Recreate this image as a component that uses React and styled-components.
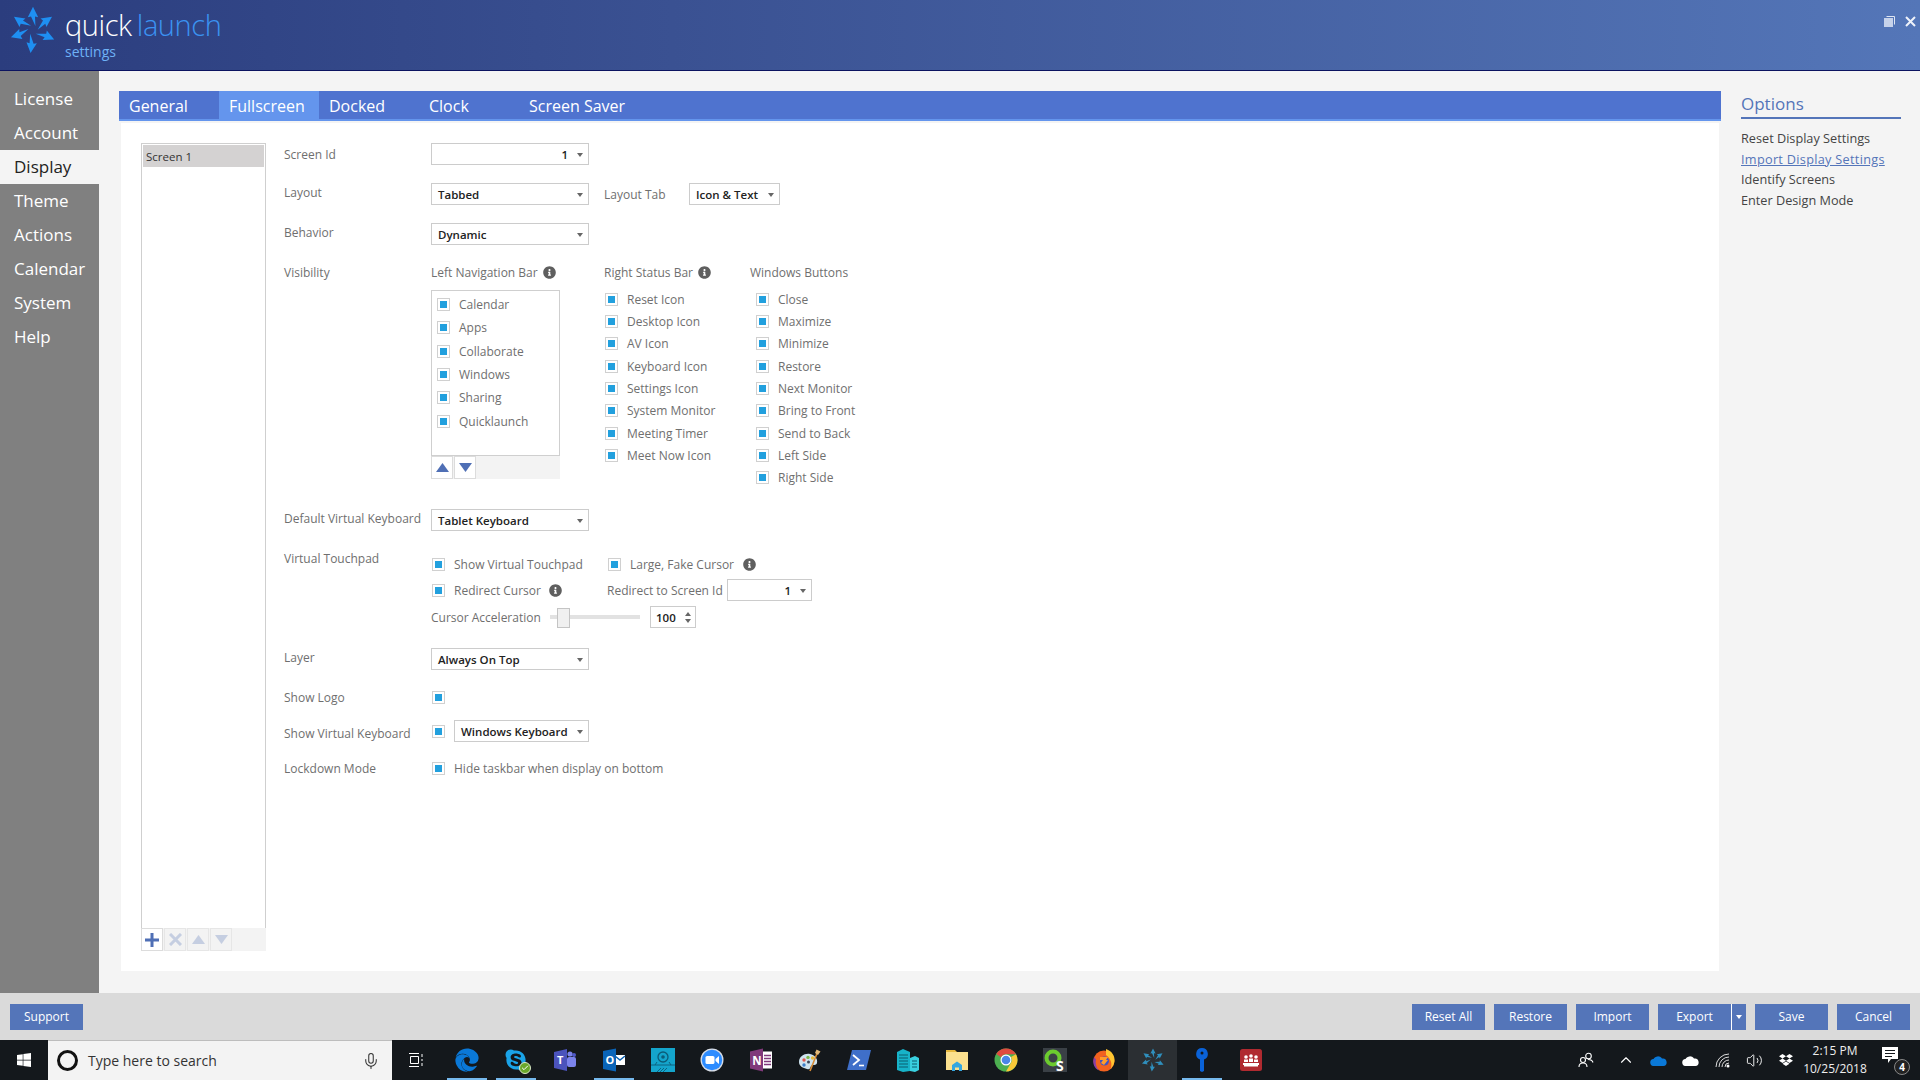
import React from 'react';
import styled, { createGlobalStyle } from 'styled-components';
import { FaInfoCircle, FaEdge, FaSkype, FaWindows, FaDropbox } from 'react-icons/fa';
import { ChevronUp, Volume2, Check, Mic } from 'lucide-react';

const Global = createGlobalStyle`
    html, body { margin: 0; padding: 0; background: #f4f4f4; }
    * { box-sizing: border-box; }
    body { font-family: "Open Sans", "Noto Sans", sans-serif; }
`;

const Page = styled.div`
    width: 1920px;
    height: 1080px;
    display: flex;
    flex-direction: column;
    overflow: hidden;
    background: #f4f4f4;
`;

const Header = styled.header`
    height: 71px;
    flex: none;
    display: flex;
    justify-content: space-between;
    padding: 6px 0 0 9px;
    background: linear-gradient(90deg, #2b3d7e 0%, #3a5192 35%, #5476b8 100%);
    border-bottom: 1px solid #0c1460;
`;

const Brand = styled.div`
    display: flex;
    gap: 8px;
`;

const BrandText = styled.div`
    display: flex;
    flex-direction: column;
`;

const BrandName = styled.div`
    font-size: 29px;
    font-weight: 300;
    line-height: 38px;
    color: #fff;
    letter-spacing: -0.4px;
    span { color: #3b93f2; margin-left: 5px; }
`;

const BrandSub = styled.div`
    font-size: 14px;
    line-height: 15px;
    color: #6eb2f6;
`;

const WindowControls = styled.div`
    display: flex;
    gap: 10px;
    padding: 10px 4px 0 0;
    color: #dfe6f3;
`;

const Body = styled.div`
    flex: 1;
    display: flex;
    min-height: 0;
`;

const Sidebar = styled.nav`
    width: 99px;
    flex: none;
    padding-top: 11px;
    background: #808080;
`;

const NavItem = styled.div`
    height: 34px;
    line-height: 34px;
    padding-left: 14px;
    font-size: 17px;
    color: ${p => (p.$active ? '#222' : '#fff')};
    background: ${p => (p.$active ? '#f4f4f4' : 'transparent')};
`;

const Main = styled.main`
    width: 1602px;
    margin: 20px 0 22px 20px;
    display: flex;
    flex-direction: column;
`;

const Tabs = styled.div`
    height: 30px;
    flex: none;
    display: flex;
    background: #4f73cf;
    border-bottom: 2px solid #6495ed;
`;

const Tab = styled.div`
    width: 100px;
    padding-left: 10px;
    font-size: 16px;
    line-height: 31px;
    white-space: nowrap;
    color: #fff;
    background: ${p => (p.$active ? '#6495ed' : 'transparent')};
`;

const Panel = styled.div`
    flex: 1;
    margin: 2px 2px 0;
    padding: 20px;
    display: flex;
    background: #fff;
`;

const ScreenColumn = styled.div`
    width: 125px;
    flex: none;
    display: flex;
    flex-direction: column;
`;

const ListBox = styled.div`
    flex: none;
    width: ${p => (p.$w ? `${p.$w}px` : 'auto')};
    height: ${p => p.$height}px;
    padding: ${p => p.$padding || '0'};
    border: 1px solid #cfcfcf;
    border-bottom-width: ${p => (p.$flush ? '0' : '1px')};
`;

const ScreenItem = styled.div`
    height: 22px;
    margin: 1px;
    padding-left: 3px;
    font-size: 11.5px;
    line-height: 23px;
    color: #333;
    background: #d4d2d2;
`;

const ListTools = styled.div`
    width: ${p => (p.$w ? `${p.$w}px` : 'auto')};
    height: 23px;
    flex: none;
    display: flex;
    gap: 1px;
    background: #f3f3f3;
`;

const ToolButton = styled.div`
    width: 22px;
    height: 23px;
    display: flex;
    align-items: center;
    justify-content: center;
    background: ${p => (p.$muted ? '#f3f3f3' : '#fff')};
    border: 1px solid #dcdcdc;
    opacity: ${p => (p.$muted ? 0.55 : 1)};
    svg { opacity: ${p => (p.$muted ? 0.5 : 1)}; }
`;

const Form = styled.div`
    margin-left: 18px;
    display: flex;
    flex-direction: column;
`;

const Row = styled.div`
    display: grid;
    grid-template-columns: 147px 1fr;
    margin-top: ${p => p.$mt || 0}px;
`;

const Label = styled.div`
    font-size: 12px;
    line-height: ${p => p.$lh || 22}px;
    padding-top: ${p => p.$pt || 0}px;
    color: #6f6f6f;
    white-space: nowrap;
`;

const Inline = styled.div`
    display: flex;
    align-items: center;
    margin-top: ${p => p.$mt || 0}px;
    min-height: ${p => p.$h || 22}px;
`;

const Select = styled.div`
    width: ${p => p.$w}px;
    height: 22px;
    flex: none;
    margin-left: ${p => p.$ml || 0}px;
    padding: 0 5px 0 6px;
    display: flex;
    align-items: center;
    border: 1px solid #cccccc;
    background: #fff;
    font-size: 11.5px;
    font-weight: 600;
    color: #222;
    white-space: nowrap;
    span { flex: 1; text-align: ${p => (p.$numeric ? 'right' : 'left')}; padding-right: ${p => (p.$numeric ? '5px' : '0')}; }
    i { width: 0; height: 0; border: 3px solid transparent; border-top: 4px solid #666; margin: 4px 0 0 4px; }
`;

const Columns = styled.div`
    display: flex;
    height: 226px;
`;

const Column = styled.div`
    width: ${p => p.$w}px;
    flex: none;
`;

const ColumnHead = styled.div`
    display: flex;
    align-items: center;
    gap: 5px;
    height: 18px;
    font-size: 12px;
    color: #6f6f6f;
    white-space: nowrap;
`;

const Info = styled(FaInfoCircle)`
    width: 13px;
    height: 13px;
    color: #5f5f5f;
    flex: none;
    margin-left: ${p => p.$ml || 0}px;
`;

const CheckGroup = styled.div`
    margin-top: ${p => p.$mt || 0}px;
    padding-left: ${p => p.$pl || 0}px;
`;

const CheckRow = styled.label`
    height: ${p => p.$h}px;
    display: flex;
    align-items: center;
`;

const Box = styled.span`
    width: 13px;
    height: 13px;
    flex: none;
    margin-left: ${p => p.$ml || 0}px;
    display: flex;
    align-items: center;
    justify-content: center;
    border: 1px solid #d0d0d0;
    background: #fff;
    &::after { content: ''; width: 7px; height: 7px; background: #22a0de; }
`;

const CheckText = styled.span`
    margin-left: ${p => p.$gap || 9}px;
    font-size: 12px;
    color: #6f6f6f;
    white-space: nowrap;
`;

const FieldText = styled.span`
    width: ${p => p.$w}px;
    flex: none;
    margin-left: ${p => p.$ml || 0}px;
    font-size: 12px;
    color: #6f6f6f;
    white-space: nowrap;
`;

const TouchCell = styled.div`
    width: ${p => p.$w}px;
    flex: none;
    display: flex;
    align-items: center;
`;

const SliderTrack = styled.div`
    width: 90px;
    height: 4px;
    flex: none;
    position: relative;
    background: #e2e2e2;
    &::after {
        content: '';
        position: absolute;
        left: 7px;
        top: -7px;
        width: 11px;
        height: 18px;
        background: #f0f0f0;
        border: 1px solid #c4c4c4;
    }
`;

const Spinner = styled.div`
    width: 46px;
    height: 22px;
    flex: none;
    margin-left: 10px;
    padding: 0 4px 0 5px;
    display: flex;
    align-items: center;
    justify-content: space-between;
    border: 1px solid #cccccc;
    font-size: 11.5px;
    font-weight: 600;
    color: #222;
`;

const SpinArrows = styled.div`
    display: flex;
    flex-direction: column;
    gap: 3px;
    i { display: block; width: 0; height: 0; border: 3px solid transparent; }
    i:first-child { border-top: 0; border-bottom: 4px solid #666; }
    i:last-child { border-bottom: 0; border-top: 4px solid #666; }
`;

const Options = styled.aside`
    width: 160px;
    margin: 20px 0 0 20px;
    flex: none;
`;

const OptionsTitle = styled.div`
    height: 28px;
    font-size: 17px;
    line-height: 26px;
    color: #5475b9;
    border-bottom: 2px solid #5475b9;
    margin-bottom: 9px;
`;

const OptionLink = styled.div`
    font-size: 12.7px;
    line-height: 20.5px;
    white-space: nowrap;
    letter-spacing: ${p => (p.$link ? '0.3px' : '0')};
    color: ${p => (p.$link ? '#5475b9' : '#444')};
    text-decoration: ${p => (p.$link ? 'underline' : 'none')};
`;

const Footer = styled.footer`
    height: 47px;
    flex: none;
    padding: 11px 10px 0;
    display: flex;
    align-items: flex-start;
    justify-content: space-between;
    background: #dadada;
`;

const FooterGroup = styled.div`
    display: flex;
    align-items: flex-start;
    gap: 9px;
`;

const Button = styled.div`
    width: ${p => p.$w || 73}px;
    height: 26px;
    padding-bottom: 2px;
    display: flex;
    align-items: center;
    justify-content: center;
    background: #5475b9;
    color: #fff;
    font-size: 12px;
`;

const Split = styled.div`
    display: flex;
    gap: 1px;
    background: #fff;
    i { width: 0; height: 0; border: 3px solid transparent; border-top: 4px solid #fff; margin-top: 4px; }
`;

const Taskbar = styled.div`
    height: 40px;
    flex: none;
    display: flex;
    align-items: stretch;
    background: #14181c;
    color: #fff;
`;

const StartButton = styled.div`
    width: 48px;
    display: flex;
    align-items: center;
    justify-content: center;
`;

const SearchBox = styled.div`
    width: 344px;
    padding: 0 12px 0 9px;
    display: flex;
    align-items: center;
    background: #f3f3f3;
    border-top: 1px solid #bdbdbd;
    color: #333;
    font-size: 14px;
`;

const Cortana = styled.span`
    width: 21px;
    height: 21px;
    flex: none;
    margin-right: 10px;
    border: 3px solid #111;
    border-radius: 50%;
`;

const SearchText = styled.span`
    flex: 1;
`;

const Apps = styled.div`
    display: flex;
`;

const AppSlot = styled.div`
    width: ${p => p.$w || 49}px;
    position: relative;
    display: flex;
    align-items: center;
    justify-content: center;
    background: ${p => (p.$focused ? '#2b2f33' : 'transparent')};
    &::after {
        content: '';
        display: ${p => (p.$open ? 'block' : 'none')};
        position: absolute;
        left: 5px;
        bottom: 0;
        width: 40px;
        height: 2px;
        background: #76b9ed;
    }
`;

const SkypeBadge = styled.span`
    position: absolute;
    left: 28px;
    top: 22px;
    width: 12px;
    height: 12px;
    display: flex;
    align-items: center;
    justify-content: center;
    border-radius: 50%;
    background: #6aa82b;
    border: 1px solid #d8e6c6;
`;

const Tray = styled.div`
    margin-left: auto;
    display: flex;
    align-items: center;
    padding-right: 12px;
`;

const TrayIcon = styled.div`
    width: 32px;
    display: flex;
    justify-content: center;
    margin-right: ${p => p.$mr || 0}px;
`;

const Clock = styled.div`
    width: 66px;
    margin-right: 14px;
    text-align: center;
    font-size: 12px;
    line-height: 18px;
    white-space: nowrap;
    color: #eee;
`;

const Notify = styled.div`
    width: 26px;
    height: 26px;
    position: relative;
`;

const NotifyCount = styled.span`
    position: absolute;
    right: -2px;
    bottom: -2px;
    width: 16px;
    height: 16px;
    display: flex;
    align-items: center;
    justify-content: center;
    border-radius: 50%;
    background: #222;
    border: 1px solid #888;
    font-size: 10px;
    font-weight: 700;
`;

function Arrows({ size, color }) {
    const angles = [0, 55, 114, 186, 252, 305];
    return (
        <svg width={size} height={size} viewBox="-30 -30 60 60">
            {angles.map(a => (
                <path key={a} transform={`rotate(${a})`} fill={color} d="M3 -5 L-2.500 -17 L-6.500 -16 L0 -29 L6.500 -16 L2.500 -17 Z" />
            ))}
        </svg>
    );
}

const Tri = ({ down, color = '#4f6fb5' }) => (
    <svg width="13" height="9" viewBox="0 0 13 9"><path fill={color} d={down ? 'M0 0h13L6.500 9z' : 'M0 9h13L6.500 0z'} /></svg>
);

const Ic = ({ children, w = 24, h = 24, vb = '0 0 24 24' }) => <svg width={w} height={h} viewBox={vb}>{children}</svg>;

const TeamsIcon = () => (
    <Ic>
        <circle cx="17" cy="6" r="2.600" fill="#7b83eb" /><circle cx="21" cy="7" r="2" fill="#5059c9" />
        <rect x="14" y="9" width="9" height="10" rx="2" fill="#7b83eb" />
        <path fill="#4b53bc" d="M1 4 L14 1 V23 L1 20 Z" />
        <text x="4" y="16" fontSize="11" fontWeight="700" fill="#fff" fontFamily="Open Sans">T</text>
    </Ic>
);
const OutlookIcon = () => (
    <Ic>
        <rect x="13" y="7" width="10" height="10" fill="#fff" /><path d="M13 8l5 4 5-4" fill="none" stroke="#0a5fb0" strokeWidth="1.400" />
        <path fill="#0a64b8" d="M1 3 L14 0.500 V23.500 L1 21 Z" />
        <text x="3.400" y="16" fontSize="11" fontWeight="700" fill="#fff" fontFamily="Open Sans">O</text>
    </Ic>
);
const WebcamIcon = () => (
    <Ic>
        <rect width="24" height="24" fill="#14a5cc" />
        <circle cx="12" cy="9" r="5" fill="none" stroke="#0b5c78" strokeWidth="1.300" /><circle cx="12" cy="9" r="1.800" fill="#0b5c78" />
        <path d="M0 17h24M6 14l-2 3M18 14l2 3M6 24l4-4M9 24l4-4M12 24l4-4" stroke="#0b5c78" strokeWidth="0.900" />
    </Ic>
);
const ZoomIcon = () => (
    <Ic>
        <circle cx="12" cy="12" r="11.500" fill="#d8dde6" /><circle cx="12" cy="12" r="10.200" fill="#2d8cff" />
        <rect x="5.500" y="8" width="9" height="8" rx="1.600" fill="#fff" /><path d="M15.500 11l3.500-3v8l-3.500-3z" fill="#fff" />
    </Ic>
);
const OneNoteIcon = () => (
    <Ic>
        <rect x="13" y="3.500" width="10" height="17" fill="#fff" />
        <path d="M15 7.500h7M15 10.500h7M15 13.500h7M15 16.500h7" stroke="#80397b" strokeWidth="1.400" />
        <path fill="#80397b" d="M1 3.500 L14 0.500 V23.500 L1 20.500 Z" />
        <text x="3.200" y="16.500" fontSize="11.500" fontWeight="700" fill="#fff" fontFamily="Open Sans">N</text>
    </Ic>
);
const PaintIcon = () => (
    <Ic>
        <path fill="#cfe3ef" d="M1 14C1 8 7 5 12 6c5 1 8 5 7 9-1 3-4 1-6 3-1 2-1 4-4 3-4-1-8-3-8-7z" />
        <circle cx="6" cy="12" r="1.700" fill="#e0584f" /><circle cx="10" cy="9.400" r="1.700" fill="#7cb84a" /><circle cx="14.500" cy="10" r="1.700" fill="#e6b93b" /><circle cx="6" cy="17" r="1.700" fill="#3d7fc9" /><circle cx="10.500" cy="14" r="1.500" fill="#39465a" />
        <path d="M20 3L12 23" stroke="#d68a35" strokeWidth="1.600" /><path d="M18.500 1.500l4 2-2.500 3.500-3-2z" fill="#e2b878" />
    </Ic>
);
const PowerShellIcon = () => (
    <Ic>
        <path fill="#3f6fc9" d="M5 2 H24 L19 22 H0 Z" />
        <path d="M6 7l6 5-6 5" fill="none" stroke="#fff" strokeWidth="1.800" /><path d="M12 17.500h5" stroke="#fff" strokeWidth="1.600" />
    </Ic>
);
const BuildingIcon = () => (
    <Ic>
        <path fill="#17b3c9" d="M1 4l6-3 7 3v19l-7 1-6-2z" /><path fill="#39d0e0" d="M14 10l5-2 4 2v12l-4 2-5-1z" />
        <path d="M3 7h9M3 10h9M3 13h9M3 16h9M3 19h9M16 13h5M16 16h5M16 19h5" stroke="#0b5f70" strokeWidth="1.100" />
    </Ic>
);
const FolderIcon = () => (
    <Ic>
        <path fill="#e8b93e" d="M1 2h9l2 2H1z" /><rect x="1" y="4" width="22" height="18" fill="#fbe08e" />
        <path fill="#35a7e0" d="M7 23v-6l5-3.500 5 3.500v6h-3v-3.500h-4V23z" />
    </Ic>
);
const ChromeIcon = () => (
    <Ic>
        <circle cx="12" cy="12" r="11.500" fill="#4caf50" />
        <path fill="#e04a3f" d="M12 .5A11.500 11.500 0 0 1 22 6.300H12a5.700 5.700 0 0 0-5 3L2.300 6A11.500 11.500 0 0 1 12 .5z" />
        <path fill="#f9c838" d="M22 6.300A11.500 11.500 0 0 1 12 23.500l5-8.700A5.700 5.700 0 0 0 17 9z" />
        <circle cx="12" cy="12" r="5.500" fill="#fff" /><circle cx="12" cy="12" r="4.300" fill="#4a86e8" />
    </Ic>
);
const SnagIcon = () => (
    <Ic>
        <rect width="24" height="24" fill="#3a4046" />
        <circle cx="10" cy="10" r="6.500" fill="none" stroke="#6ccb2f" strokeWidth="4" />
        <text x="13" y="23" fontSize="14" fontWeight="700" fill="#fff" fontFamily="Open Sans">S</text>
    </Ic>
);
const FirefoxIcon = () => (
    <Ic>
        <circle cx="12" cy="13" r="10.500" fill="#f2621f" />
        <path fill="#ffc531" d="M14 1c6 2 9 7 8.500 12-.3 3-2 6-4 8 2-4 1-10-4.500-14z" />
        <path fill="#8a3fa8" d="M2 9c-2 6 0 11 5 13.500-3-3-4-8-3-11z" />
        <circle cx="12.500" cy="13" r="4.500" fill="#3f55c4" /><path fill="#ff9c2a" d="M8 9h8l-2 3h2l-4 5-3-2 2-3H8z" />
    </Ic>
);
const KeyIcon = () => (
    <Ic>
        <path fill="#0a62d8" d="M12 0a6 6 0 0 1 2 11.600V23l-2 1-2-1V11.600A6 6 0 0 1 12 0z" />
        <circle cx="12" cy="5" r="1.500" fill="#14181c" />
    </Ic>
);
const RedIcon = () => (
    <Ic>
        <rect x="1" y="1" width="22" height="22" rx="2.500" fill="#b02a30" />
        <path fill="#fff" d="M4 15h16v2H4zM5 17h14v1.500H5z" />
        <circle cx="7" cy="9" r="1.800" fill="#fff" /><circle cx="12" cy="8" r="1.800" fill="#fff" /><circle cx="17" cy="9" r="1.800" fill="#fff" />
        <path fill="#fff" d="M5 14v-2.500h4V14zM10 14v-3.500h4V14zM15 14v-2.500h4V14z" />
    </Ic>
);
const Cloud = ({ color }) => (
    <svg width="17" height="11" viewBox="0 0 17 11"><path fill={color} d="M4 11a3.500 3.500 0 0 1-.5-7A5 5 0 0 1 12 3.500 3.800 3.800 0 0 1 13.500 11z" /></svg>
);
const People = () => (
    <svg width="16" height="16" viewBox="0 0 16 16" fill="none" stroke="#fff" strokeWidth="1.100">
        <circle cx="10.500" cy="4" r="2.800" /><circle cx="5" cy="8" r="2.500" /><path d="M1 15c0-3 2-4 4-4s4 1 4 4M10 7.500c2.500 0 4.500 1 5 3" />
    </svg>
);
const Signal = () => (
    <svg width="15" height="15" viewBox="0 0 15 15" fill="none" stroke="#ddd" strokeWidth="1">
        <path d="M1 14A13 13 0 0 1 14 1M4 14A10 10 0 0 1 14 4M7 14a7 7 0 0 1 7-7M10 14a4 4 0 0 1 4-4" />
        <circle cx="13" cy="13" r="1.500" fill="#fff" stroke="none" />
    </svg>
);

const leftNav = ['Calendar', 'Apps', 'Collaborate', 'Windows', 'Sharing', 'Quicklaunch'];
const rightStatus = ['Reset Icon', 'Desktop Icon', 'AV Icon', 'Keyboard Icon', 'Settings Icon', 'System Monitor', 'Meeting Timer', 'Meet Now Icon'];
const windowButtons = ['Close', 'Maximize', 'Minimize', 'Restore', 'Next Monitor', 'Bring to Front', 'Send to Back', 'Left Side', 'Right Side'];
const navItems = ['License', 'Account', 'Display', 'Theme', 'Actions', 'Calendar', 'System', 'Help'];

const Checks = ({ items, h, gap }) => items.map(item => (
    <CheckRow key={item} $h={h}>
        <Box />
        <CheckText $gap={gap}>{item}</CheckText>
    </CheckRow>
));

export default function App() {
    return (
        <Page>
            <Global />
            <Header>
                <Brand>
                    <Arrows size={48} color="#1e8ff2" />
                    <BrandText>
                        <BrandName>quick<span>launch</span></BrandName>
                        <BrandSub>settings</BrandSub>
                    </BrandText>
                </Brand>
                <WindowControls>
                    <svg width="11" height="11" viewBox="0 0 11 11"><path fill="#c6d2ea" d="M0 2h9v9H0z" /><path fill="none" stroke="#dfe6f3" d="M2.500.5h8v8" /></svg>
                    <svg width="11" height="11" viewBox="0 0 11 11"><path stroke="#eef2fa" strokeWidth="2" d="M1 1l9 9M10 1l-9 9" /></svg>
                </WindowControls>
            </Header>
            <Body>
                <Sidebar>
                    {navItems.map(n => <NavItem key={n} $active={n === 'Display'}>{n}</NavItem>)}
                </Sidebar>
                <Main>
                    <Tabs>
                        <Tab>General</Tab>
                        <Tab $active>Fullscreen</Tab>
                        <Tab>Docked</Tab>
                        <Tab>Clock</Tab>
                        <Tab>Screen Saver</Tab>
                    </Tabs>
                    <Panel>
                        <ScreenColumn>
                            <ListBox $height={785} $flush>
                                <ScreenItem>Screen 1</ScreenItem>
                            </ListBox>
                            <ListTools>
                                <ToolButton>
                                    <svg width="14" height="14" viewBox="0 0 14 14"><path fill="#4f6fb5" d="M5.500 0h3v5.500H14v3H8.500V14h-3V8.500H0v-3h5.500z" /></svg>
                                </ToolButton>
                                <ToolButton $muted>
                                    <svg width="13" height="13" viewBox="0 0 13 13"><path stroke="#4f6fb5" strokeWidth="3" d="M1 1l11 11M12 1L1 12" /></svg>
                                </ToolButton>
                                <ToolButton $muted><Tri /></ToolButton>
                                <ToolButton $muted><Tri down /></ToolButton>
                            </ListTools>
                        </ScreenColumn>
                        <Form>
                            <Row>
                                <Label $lh={20} $pt={2}>Screen Id</Label>
                                <Select $w={158} $numeric><span>1</span><i /></Select>
                            </Row>
                            <Row $mt={18}>
                                <Label $lh={20}>Layout</Label>
                                <Inline>
                                    <Select $w={158}><span>Tabbed</span><i /></Select>
                                    <FieldText $w={85} $ml={15}>Layout Tab</FieldText>
                                    <Select $w={91}><span>Icon &amp; Text</span><i /></Select>
                                </Inline>
                            </Row>
                            <Row $mt={18}>
                                <Label $lh={20}>Behavior</Label>
                                <Select $w={158}><span>Dynamic</span><i /></Select>
                            </Row>
                            <Row $mt={18}>
                                <Label $lh={18} $pt={1}>Visibility</Label>
                                <Columns>
                                    <Column $w={173}>
                                        <ColumnHead>Left Navigation Bar <Info /></ColumnHead>
                                        <CheckGroup $mt={9}>
                                            <ListBox $w={129} $height={166} $padding="2px 0 0 5px">
                                                <Checks items={leftNav} h={23.300} gap={9} />
                                            </ListBox>
                                            <ListTools $w={129}>
                                                <ToolButton><Tri /></ToolButton>
                                                <ToolButton><Tri down /></ToolButton>
                                            </ListTools>
                                        </CheckGroup>
                                    </Column>
                                    <Column $w={146}>
                                        <ColumnHead>Right Status Bar <Info /></ColumnHead>
                                        <CheckGroup $mt={7} $pl={1}>
                                            <Checks items={rightStatus} h={22.350} gap={9} />
                                        </CheckGroup>
                                    </Column>
                                    <Column $w={200}>
                                        <ColumnHead>Windows Buttons</ColumnHead>
                                        <CheckGroup $mt={7} $pl={6}>
                                            <Checks items={windowButtons} h={22.350} gap={9} />
                                        </CheckGroup>
                                    </Column>
                                </Columns>
                            </Row>
                            <Row $mt={20}>
                                <Label $lh={20}>Default Virtual Keyboard</Label>
                                <Select $w={158}><span>Tablet Keyboard</span><i /></Select>
                            </Row>
                            <Row $mt={18}>
                                <Label $lh={18} $pt={1}>Virtual Touchpad</Label>
                                <div>
                                    <Inline $mt={4}>
                                        <TouchCell $w={177}>
                                            <Box $ml={1} />
                                            <CheckText>Show Virtual Touchpad</CheckText>
                                        </TouchCell>
                                        <Box />
                                        <CheckText>Large, Fake Cursor</CheckText>
                                        <Info $ml={9} />
                                    </Inline>
                                    <Inline $mt={4}>
                                        <TouchCell $w={176}>
                                            <Box $ml={1} />
                                            <CheckText>Redirect Cursor</CheckText>
                                            <Info $ml={8} />
                                        </TouchCell>
                                        <FieldText $w={120}>Redirect to Screen Id</FieldText>
                                        <Select $w={85} $numeric><span>1</span><i /></Select>
                                    </Inline>
                                    <Inline $mt={5}>
                                        <FieldText $w={119}>Cursor Acceleration</FieldText>
                                        <SliderTrack />
                                        <Spinner>100<SpinArrows><i /><i /></SpinArrows></Spinner>
                                    </Inline>
                                </div>
                            </Row>
                            <Row $mt={20}>
                                <Label $lh={20}>Layer</Label>
                                <Select $w={158}><span>Always On Top</span><i /></Select>
                            </Row>
                            <Row $mt={18}>
                                <Label $lh={18} $pt={1}>Show Logo</Label>
                                <Inline $h={18}><Box $ml={1} /></Inline>
                            </Row>
                            <Row $mt={13}>
                                <Label $lh={16} $pt={6}>Show Virtual Keyboard</Label>
                                <Inline>
                                    <Box $ml={1} />
                                    <Select $w={135} $ml={9}><span>Windows Keyboard</span><i /></Select>
                                </Inline>
                            </Row>
                            <Row $mt={18}>
                                <Label $lh={18}>Lockdown Mode</Label>
                                <Inline $h={18} $mt={-1}>
                                    <Box $ml={1} />
                                    <CheckText>Hide taskbar when display on bottom</CheckText>
                                </Inline>
                            </Row>
                        </Form>
                    </Panel>
                </Main>
                <Options>
                    <OptionsTitle>Options</OptionsTitle>
                    <OptionLink>Reset Display Settings</OptionLink>
                    <OptionLink $link>Import Display Settings</OptionLink>
                    <OptionLink>Identify Screens</OptionLink>
                    <OptionLink>Enter Design Mode</OptionLink>
                </Options>
            </Body>
            <Footer>
                <Button>Support</Button>
                <FooterGroup>
                    <Button>Reset All</Button>
                    <Button>Restore</Button>
                    <Button>Import</Button>
                    <Split>
                        <Button>Export</Button>
                        <Button $w={14}><i /></Button>
                    </Split>
                    <Button>Save</Button>
                    <Button>Cancel</Button>
                </FooterGroup>
            </Footer>
            <Taskbar>
                <StartButton><FaWindows size={16} color="#fff" /></StartButton>
                <SearchBox>
                    <Cortana />
                    <SearchText>Type here to search</SearchText>
                    <Mic size={18} color="#333" strokeWidth={1.400} />
                </SearchBox>
                <Apps>
                    <AppSlot $w={50}>
                        <svg width="16" height="14" viewBox="0 0 16 14" fill="none" stroke="#fff"><path d="M0 .5h10M0 13.500h10M1.500 3.500h8v7h-8zM13 1v3M13 6v2M13 10v3" /></svg>
                    </AppSlot>
                    <AppSlot $open><FaEdge size={24} color="#0a78d7" /></AppSlot>
                    <AppSlot $open>
                        <FaSkype size={24} color="#1aa3e8" />
                        <SkypeBadge><Check size={8} color="#fff" strokeWidth={3} /></SkypeBadge>
                    </AppSlot>
                    <AppSlot><TeamsIcon /></AppSlot>
                    <AppSlot $open><OutlookIcon /></AppSlot>
                    <AppSlot><WebcamIcon /></AppSlot>
                    <AppSlot><ZoomIcon /></AppSlot>
                    <AppSlot><OneNoteIcon /></AppSlot>
                    <AppSlot><PaintIcon /></AppSlot>
                    <AppSlot><PowerShellIcon /></AppSlot>
                    <AppSlot><BuildingIcon /></AppSlot>
                    <AppSlot><FolderIcon /></AppSlot>
                    <AppSlot><ChromeIcon /></AppSlot>
                    <AppSlot><SnagIcon /></AppSlot>
                    <AppSlot><FirefoxIcon /></AppSlot>
                    <AppSlot $focused><Arrows size={24} color="#2f8fbd" /></AppSlot>
                    <AppSlot $open><KeyIcon /></AppSlot>
                    <AppSlot><RedIcon /></AppSlot>
                </Apps>
                <Tray>
                    <TrayIcon $mr={8}><People /></TrayIcon>
                    <TrayIcon><ChevronUp size={18} color="#fff" strokeWidth={1.500} /></TrayIcon>
                    <TrayIcon><Cloud color="#0a78d7" /></TrayIcon>
                    <TrayIcon><Cloud color="#fff" /></TrayIcon>
                    <TrayIcon><Signal /></TrayIcon>
                    <TrayIcon><Volume2 size={17} color="#fff" strokeWidth={1.300} /></TrayIcon>
                    <TrayIcon><FaDropbox size={14} color="#fff" /></TrayIcon>
                    <Clock>2:15 PM<br />10/25/2018</Clock>
                    <Notify>
                        <svg width="18" height="17" viewBox="0 0 18 17"><path fill="#fff" d="M0 0h16v12H9l-3 4v-4H0z" /><path stroke="#14181c" d="M3 3.500h10M3 6.500h10M3 9.500h7" /></svg>
                        <NotifyCount>4</NotifyCount>
                    </Notify>
                </Tray>
            </Taskbar>
        </Page>
    );
}
